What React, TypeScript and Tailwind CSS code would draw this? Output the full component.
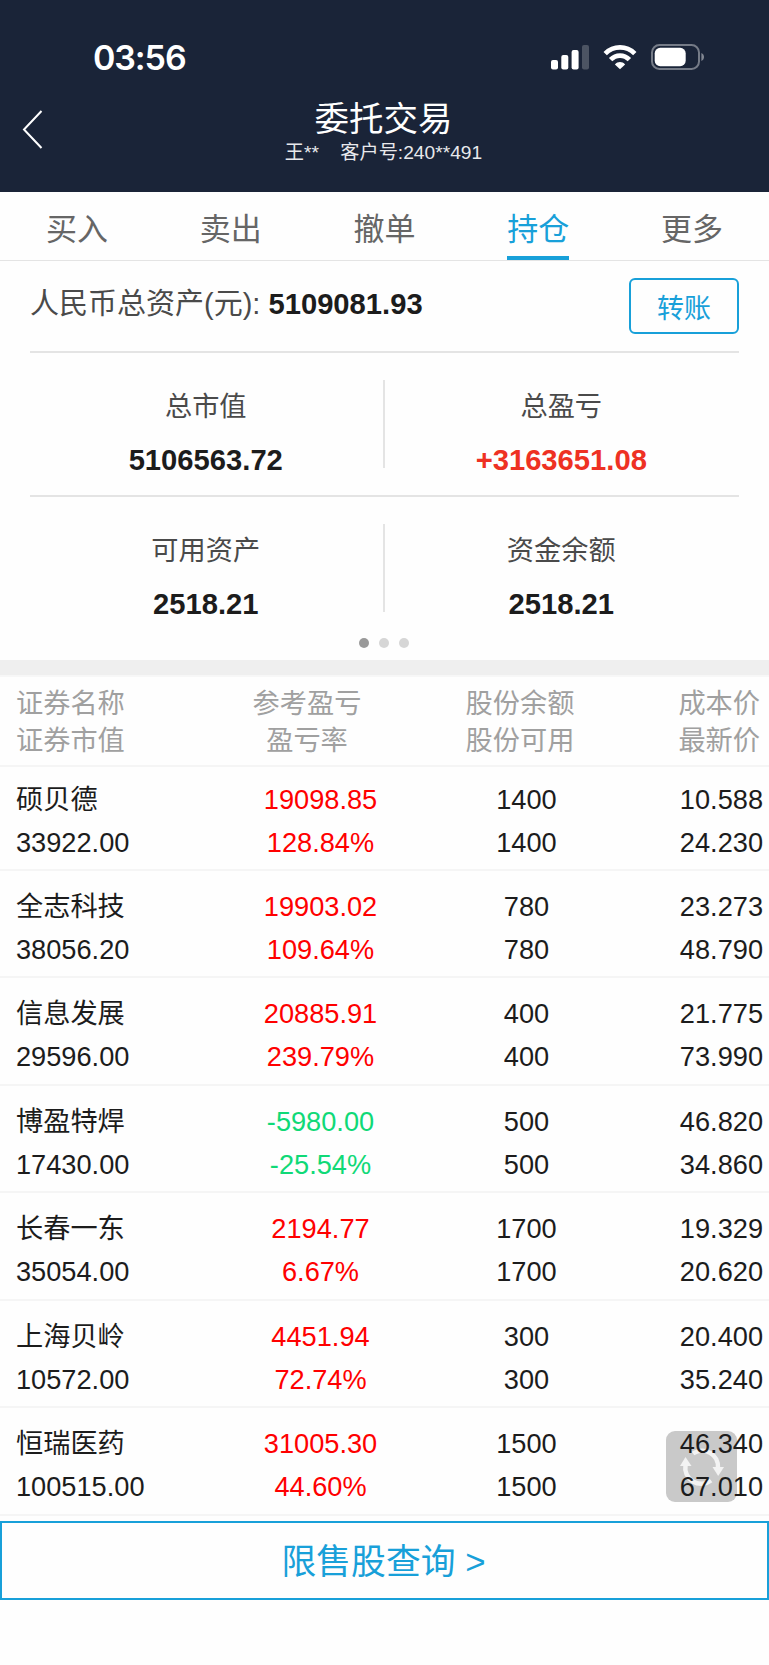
type Summary = { label: string; value: string; rise?: boolean };

type Holding = {
  name: string;
  marketValue: string;
  profit: string;
  rate: string;
  balance: string;
  available: string;
  cost: string;
  price: string;
};

const tabs = ["买入", "卖出", "撤单", "持仓", "更多"];
const activeTab = "持仓";

const summaries: Summary[][] = [
  [
    { label: "总市值", value: "5106563.72" },
    { label: "总盈亏", value: "+3163651.08", rise: true },
  ],
  [
    { label: "可用资产", value: "2518.21" },
    { label: "资金余额", value: "2518.21" },
  ],
];

const holdings: Holding[] = [
  { name: "硕贝德", marketValue: "33922.00", profit: "19098.85", rate: "128.84%", balance: "1400", available: "1400", cost: "10.588", price: "24.230" },
  { name: "全志科技", marketValue: "38056.20", profit: "19903.02", rate: "109.64%", balance: "780", available: "780", cost: "23.273", price: "48.790" },
  { name: "信息发展", marketValue: "29596.00", profit: "20885.91", rate: "239.79%", balance: "400", available: "400", cost: "21.775", price: "73.990" },
  { name: "博盈特焊", marketValue: "17430.00", profit: "-5980.00", rate: "-25.54%", balance: "500", available: "500", cost: "46.820", price: "34.860" },
  { name: "长春一东", marketValue: "35054.00", profit: "2194.77", rate: "6.67%", balance: "1700", available: "1700", cost: "19.329", price: "20.620" },
  { name: "上海贝岭", marketValue: "10572.00", profit: "4451.94", rate: "72.74%", balance: "300", available: "300", cost: "20.400", price: "35.240" },
  { name: "恒瑞医药", marketValue: "100515.00", profit: "31005.30", rate: "44.60%", balance: "1500", available: "1500", cost: "46.340", price: "67.010" },
];

function StatusBar() {
  return (
    <div className="flex h-[94px] items-start justify-between pt-[37px] pr-[64px] pl-[93px]">
      <span className="font-['Inter'] text-[34px] leading-[42px] font-semibold tracking-[-1.1px]">
        03:56
      </span>
      <div className="flex items-center pt-[7px]">
        {/* Signal */}
        <svg width="38" height="26" viewBox="0 0 38 26" fill="#fff">
          <rect x="0" y="16" width="7" height="9.5" rx="2" />
          <rect x="10.3" y="11" width="7" height="14.5" rx="2" />
          <rect x="20.6" y="6" width="7" height="19.5" rx="2" />
          <rect x="31" y="1" width="7" height="24.5" rx="2" opacity="0.22" />
        </svg>
        {/* Wifi */}
        <svg className="ml-[14px]" width="34" height="26" viewBox="0 0 34 26" fill="none" stroke="#fff">
          <path d="M2.2 9.6C10.6 1.4 23.4 1.4 31.8 9.6" strokeWidth="4.8" />
          <path d="M7.6 15.6C13 10.2 21 10.2 26.4 15.6" strokeWidth="4.8" />
          <path d="M17 25.2L11.9 20.4C14.9 17.3 19.1 17.3 22.1 20.4Z" fill="#fff" stroke="none" />
        </svg>
        {/* Battery */}
        <svg className="ml-[14px]" width="54" height="26" viewBox="0 0 54 26" fill="none">
          <rect x="1" y="1" width="47" height="24" rx="7.5" stroke="#fff" strokeOpacity="0.4" strokeWidth="2" />
          <rect x="3.7" y="3.8" width="31" height="18.4" rx="5.5" fill="#fff" />
          <path d="M50.4 9v8c1.6-.7 2.6-2.2 2.6-4s-1-3.3-2.6-4z" fill="#fff" fillOpacity="0.45" />
        </svg>
      </div>
    </div>
  );
}

function TitleBar() {
  return (
    <div className="flex h-[98px] items-start px-[22px]">
      <svg className="mt-[16px]" width="22" height="40" viewBox="0 0 22 40" fill="none" stroke="#fff" strokeWidth="2">
        <path d="M19.5 1L2 19.5L19.5 38" />
      </svg>
      <div className="mr-[24px] flex-1 text-center">
        <h1 className="pt-[4px] text-[34.5px] leading-[42px]">委托交易</h1>
        <p className="text-[19.2px] leading-[26px] text-[#e8e9ec]">
          王**&nbsp;&nbsp;&nbsp;&nbsp;客户号:240**491
        </p>
      </div>
    </div>
  );
}

function HoldingRow({ item, first }: { item: Holding; first: boolean }) {
  const profitColor = item.profit.startsWith("-") ? "text-[#10d977]" : "text-[#ff0000]";
  return (
    <div
      className={`grid grid-cols-[223px_195px_217px_128px] border-b-2 border-[#f5f5f5] text-[27.2px] leading-[43px] text-[#1c1c1c] ${
        first ? "h-[103.5px] pt-[11px]" : "h-[107.5px] pt-[14px]"
      }`}
    >
      <div className="pl-4">
        <p>{item.name}</p>
        <p>{item.marketValue}</p>
      </div>
      <div className={`text-center ${profitColor}`}>
        <p>{item.profit}</p>
        <p>{item.rate}</p>
      </div>
      <div className="text-center">
        <p>{item.balance}</p>
        <p>{item.available}</p>
      </div>
      {/* Prices stay readable above the floating refresh button */}
      <div className="relative z-10 text-right">
        <p>{item.cost}</p>
        <p>{item.price}</p>
      </div>
    </div>
  );
}

function RefreshButton() {
  return (
    <button className="absolute top-[1431px] left-[666px] size-[71px] rounded-[9px] bg-[#c9c9c9]">
      <svg width="71" height="71" viewBox="0 0 71 71" fill="none" stroke="#f3f3f3" strokeWidth="4.5">
        <path d="M27 22.5A16 16 0 0 1 52 37" />
        <path d="M45 49.5A16 16 0 0 1 19.5 34" />
        <path d="M46.5 36H58L52.2 45Z" fill="#f3f3f3" stroke="none" />
        <path d="M14 35H25.5L19.5 26Z" fill="#f3f3f3" stroke="none" />
      </svg>
    </button>
  );
}

export default function App() {
  return (
    <div className="relative h-[1665px] w-[769px] overflow-hidden bg-[#fefefe] font-['Liberation_Sans','Noto_Sans_CJK_SC',sans-serif]">
      <header className="h-[192px] bg-[#1a2438] text-white">
        <StatusBar />
        <TitleBar />
      </header>

      {/* Tabs */}
      <nav className="grid h-[69px] grid-cols-5 border-b border-[#e4e4e4] text-[31px] leading-[42px] text-[#666]">
        {tabs.map((tab) => (
          <div key={tab} className="flex justify-center">
            <span
              className={`h-[68px] pt-[17px] ${
                tab === activeTab ? "border-b-4 border-[#18a0d9] text-[#18a0d9]" : ""
              }`}
            >
              {tab}
            </span>
          </div>
        ))}
      </nav>

      {/* Assets */}
      <section className="px-[30px]">
        <div className="flex h-[92px] items-start justify-between border-b-2 border-[#e4e4e4]">
          <p className="pt-[23px] text-[29px] leading-[40px] text-[#4a4a4a]">
            人民币总资产(元): <b className="text-[29.2px] text-[#1c1c1c]">5109081.93</b>
          </p>
          <button className="mt-[17px] h-[56px] w-[110px] rounded-md border-2 border-[#18a0d9] pt-[6px] text-[27px] text-[#18a0d9]">
            转账
          </button>
        </div>
        {summaries.map((row, i) => (
          <div
            key={i}
            className={`grid grid-cols-2 pt-[27px] ${i === 0 ? "h-[144px] border-b-2 border-[#e4e4e4]" : "h-[141px]"}`}
          >
            {row.map((item, j) => (
              <div
                key={item.label}
                className={`h-[88px] pr-px text-center ${j === 0 ? "border-r-2 border-[#e4e4e4]" : ""}`}
              >
                <p className="pt-[7px] text-[27.2px] leading-[40px] text-[#4a4a4a]">{item.label}</p>
                <p
                  className={`pt-[13px] text-[29.2px] leading-[40px] font-bold ${
                    item.rise ? "text-[#ee3123]" : "text-[#1c1c1c]"
                  }`}
                >
                  {item.value}
                </p>
              </div>
            ))}
          </div>
        ))}
        <div className="flex h-[22px] justify-center gap-[10px] pr-[2px]">
          <i className="size-[10px] rounded-full bg-[#999]" />
          <i className="size-[10px] rounded-full bg-[#d6d6d6]" />
          <i className="size-[10px] rounded-full bg-[#d6d6d6]" />
        </div>
      </section>

      <div className="h-[17px] border-b-2 border-[#f7f7f7] bg-[#efefef]" />

      {/* Holdings */}
      <div className="grid h-[90px] grid-cols-[210px_194px_232px_124px] border-b-2 border-[#f5f5f5] pt-[8px] text-[27.2px] leading-[37px] text-[#a0a0a0]">
        <p className="pl-4">证券名称<br />证券市值</p>
        <p className="text-center">参考盈亏<br />盈亏率</p>
        <p className="text-center">股份余额<br />股份可用</p>
        <p className="text-right">成本价<br />最新价</p>
      </div>
      {holdings.map((item, i) => (
        <HoldingRow key={item.name} item={item} first={i === 0} />
      ))}

      <button className="mt-[5px] h-[79px] w-full border-2 border-[#18a0d9] pt-[4px] pr-[2px] text-[34.8px] text-[#18a0d9]">
        限售股查询 &gt;
      </button>

      <RefreshButton />
    </div>
  );
}
